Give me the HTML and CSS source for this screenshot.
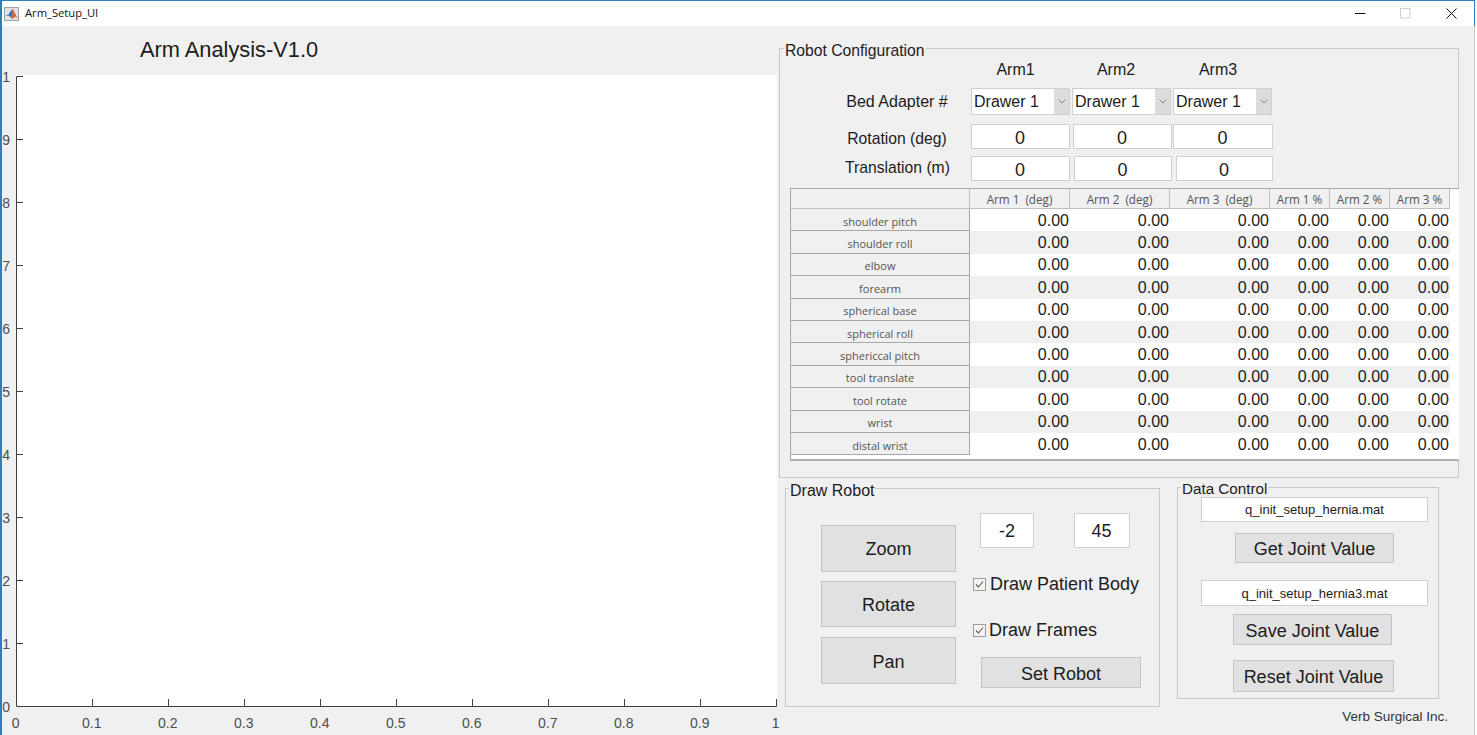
FILE: index.html
```html
<!DOCTYPE html>
<html>
<head>
<meta charset="utf-8">
<title>Arm_Setup_UI</title>
<link rel="stylesheet" href="styles.css">
</head>
<body>
<div class="window">
    <div class="titlebar">
        <svg class="app-icon" width="15" height="14" viewBox="0 0 15 14">
            <rect x="0.5" y="0.5" width="14" height="13" fill="#dfe2e8" stroke="#a0a0a0"/>
            <path d="M1.5 9 L5 7 L7.5 3 L9 5.5 L7 11 L5 8.5 Z" fill="#2f6fb0"/>
            <path d="M7.5 3 L9 2 L13.5 11.5 L11 9.5 L8.5 12 L7 11 L9 6 Z" fill="#e2602a"/>
        </svg>
        <span class="app-name">Arm_Setup_UI</span>
        <div class="win-btn first-btn">
            <svg width="11" height="11" viewBox="0 0 11 11"><path d="M0 5.5 H10.5" stroke="#111" fill="none"/></svg>
        </div>
        <div class="win-btn">
            <svg width="11" height="11" viewBox="0 0 11 11"><rect x="0.5" y="0.5" width="9.5" height="9.5" stroke="#cfcfcf" fill="none"/></svg>
        </div>
        <div class="win-btn">
            <svg width="11" height="11" viewBox="0 0 11 11"><path d="M0.5 0.5 L10.5 10.5 M10.5 0.5 L0.5 10.5" stroke="#111" fill="none"/></svg>
        </div>
    </div>

    <div class="content">
        <div class="plot-col">
            <div class="plot-title">Arm Analysis-V1.0</div>
            <svg class="axes" width="775" height="660" viewBox="0 0 775 660">
                <rect x="14" y="0" width="761" height="632" fill="#fff"/>
                <path d="M14.5 1.5 V631.5 H774.5 V624" fill="none" stroke="#404040"/>
                <path d="M14.5 1.5 H21 M14.5 64.5 H21 M14.5 127.5 H21 M14.5 190.5 H21 M14.5 253.5 H21 M14.5 316.5 H21 M14.5 379.5 H21 M14.5 442.5 H21 M14.5 505.5 H21 M14.5 568.5 H21" fill="none" stroke="#404040"/>
                <path d="M90.5 631.5 V624 M166.5 631.5 V624 M242.5 631.5 V624 M318.5 631.5 V624 M394.5 631.5 V624 M470.5 631.5 V624 M546.5 631.5 V624 M622.5 631.5 V624 M698.5 631.5 V624" fill="none" stroke="#404040"/>
                <g class="y-labels">
                    <text x="8" y="6.5">1</text>
                    <text x="8" y="69.5">9</text>
                    <text x="8" y="132.5">8</text>
                    <text x="8" y="195.5">7</text>
                    <text x="8" y="258.5">6</text>
                    <text x="8" y="321.5">5</text>
                    <text x="8" y="384.5">4</text>
                    <text x="8" y="447.5">3</text>
                    <text x="8" y="510.5">2</text>
                    <text x="8" y="573.5">1</text>
                    <text x="8" y="637">0</text>
                </g>
                <g class="x-labels">
                    <text x="13.7" y="652.5">0</text>
                    <text x="89.7" y="652.5">0.1</text>
                    <text x="165.7" y="652.5">0.2</text>
                    <text x="241.7" y="652.5">0.3</text>
                    <text x="317.7" y="652.5">0.4</text>
                    <text x="393.7" y="652.5">0.5</text>
                    <text x="469.7" y="652.5">0.6</text>
                    <text x="545.7" y="652.5">0.7</text>
                    <text x="621.7" y="652.5">0.8</text>
                    <text x="697.7" y="652.5">0.9</text>
                    <text x="773.7" y="652.5">1</text>
                </g>
            </svg>
        </div>

        <div class="side-col">
            <div class="panel robot-panel">
                <div class="panel-title robot-title">Robot Configuration</div>

                <div class="arm-heads">
                    <span class="arm-head">Arm1</span>
                    <span class="arm-head">Arm2</span>
                    <span class="arm-head arm-head-last">Arm3</span>
                </div>

                <div class="cfg-row bed-row">
                    <div class="cfg-label bed-label">Bed Adapter #</div>
                    <div class="drop">Drawer 1<span class="drop-arrow"><svg width="8" height="5" viewBox="0 0 8 5"><path d="M0.5 0.5 L4 4 L7.5 0.5" fill="none" stroke="#808080"/></svg></span></div>
                    <div class="drop drop-next">Drawer 1<span class="drop-arrow"><svg width="8" height="5" viewBox="0 0 8 5"><path d="M0.5 0.5 L4 4 L7.5 0.5" fill="none" stroke="#808080"/></svg></span></div>
                    <div class="drop drop-next">Drawer 1<span class="drop-arrow"><svg width="8" height="5" viewBox="0 0 8 5"><path d="M0.5 0.5 L4 4 L7.5 0.5" fill="none" stroke="#808080"/></svg></span></div>
                </div>

                <div class="cfg-row rot-row">
                    <div class="cfg-label label-down">Rotation (deg)</div>
                    <div class="edit cfg-edit">0</div>
                    <div class="edit cfg-edit rot-second">0</div>
                    <div class="edit cfg-edit rot-third">0</div>
                </div>

                <div class="cfg-row trans-row">
                    <div class="cfg-label label-up">Translation (m)</div>
                    <div class="edit cfg-edit">0</div>
                    <div class="edit cfg-edit trans-second">0</div>
                    <div class="edit cfg-edit trans-third">0</div>
                </div>

                <div class="table-wrap">
                    <table class="joints">
                        <colgroup>
                            <col class="col-name"><col class="col-deg"><col class="col-deg"><col class="col-deg"><col class="col-pct"><col class="col-pct"><col class="col-pct">
                        </colgroup>
                        <thead>
                            <tr><th></th><th>Arm 1&nbsp; (deg)</th><th>Arm 2&nbsp; (deg)</th><th>Arm 3&nbsp; (deg)</th><th>Arm 1 %</th><th>Arm 2 %</th><th>Arm 3 %</th></tr>
                        </thead>
                        <tbody>
                            <tr><th>shoulder pitch</th><td>0.00</td><td>0.00</td><td>0.00</td><td>0.00</td><td>0.00</td><td>0.00</td></tr>
                            <tr><th>shoulder roll</th><td>0.00</td><td>0.00</td><td>0.00</td><td>0.00</td><td>0.00</td><td>0.00</td></tr>
                            <tr><th>elbow</th><td>0.00</td><td>0.00</td><td>0.00</td><td>0.00</td><td>0.00</td><td>0.00</td></tr>
                            <tr><th>forearm</th><td>0.00</td><td>0.00</td><td>0.00</td><td>0.00</td><td>0.00</td><td>0.00</td></tr>
                            <tr><th>spherical base</th><td>0.00</td><td>0.00</td><td>0.00</td><td>0.00</td><td>0.00</td><td>0.00</td></tr>
                            <tr><th>spherical roll</th><td>0.00</td><td>0.00</td><td>0.00</td><td>0.00</td><td>0.00</td><td>0.00</td></tr>
                            <tr><th>sphericcal pitch</th><td>0.00</td><td>0.00</td><td>0.00</td><td>0.00</td><td>0.00</td><td>0.00</td></tr>
                            <tr><th>tool translate</th><td>0.00</td><td>0.00</td><td>0.00</td><td>0.00</td><td>0.00</td><td>0.00</td></tr>
                            <tr><th>tool rotate</th><td>0.00</td><td>0.00</td><td>0.00</td><td>0.00</td><td>0.00</td><td>0.00</td></tr>
                            <tr><th>wrist</th><td>0.00</td><td>0.00</td><td>0.00</td><td>0.00</td><td>0.00</td><td>0.00</td></tr>
                            <tr><th>distal wrist</th><td>0.00</td><td>0.00</td><td>0.00</td><td>0.00</td><td>0.00</td><td>0.00</td></tr>
                        </tbody>
                    </table>
                </div>
            </div>

            <div class="bottom-row">
                <div class="panel draw-panel">
                    <div class="panel-title draw-title">Draw Robot</div>
                    <div class="draw-buttons">
                        <div class="btn zoom-btn">Zoom</div>
                        <div class="btn rotate-btn">Rotate</div>
                        <div class="btn pan-btn">Pan</div>
                    </div>
                    <div class="draw-options">
                        <div class="view-row">
                            <div class="edit view-edit">-2</div>
                            <div class="edit view-edit view-edit-wide">45</div>
                        </div>
                        <div class="check check-body">
                            <span class="check-box"><svg width="11" height="11" viewBox="0 0 11 11"><path d="M2 5.5 L4.5 8 L9 2.5" fill="none" stroke="#555" stroke-width="1.1"/></svg></span>
                            Draw Patient Body
                        </div>
                        <div class="check check-frames">
                            <span class="check-box"><svg width="11" height="11" viewBox="0 0 11 11"><path d="M2 5.5 L4.5 8 L9 2.5" fill="none" stroke="#555" stroke-width="1.1"/></svg></span>
                            Draw Frames
                        </div>
                        <div class="btn set-btn">Set Robot</div>
                    </div>
                </div>

                <div class="data-col">
                    <div class="panel data-panel">
                        <div class="panel-title data-title">Data Control</div>
                        <div class="edit file-edit file-first">q_init_setup_hernia.mat</div>
                        <div class="btn get-btn">Get Joint Value</div>
                        <div class="edit file-edit file-second">q_init_setup_hernia3.mat</div>
                        <div class="btn save-btn">Save Joint Value</div>
                        <div class="btn reset-btn">Reset Joint Value</div>
                    </div>
                    <div class="credit">Verb Surgical Inc.</div>
                </div>
            </div>
        </div>
    </div>
</div>
</body>
</html>
```
FILE: styles.css
```css
html, body {
    margin: 0;
    background: #fff;
}
* {
    box-sizing: border-box;
    font-family: "Liberation Sans", Arial, sans-serif;
}
.window {
    width: 1475px;
    height: 735px;
    border-top: 1px solid #2b7cc0;
    border-left: 2px solid #2b7cc0;
    overflow: hidden;
    color: #1c1c1c;
}

/* title bar */
.titlebar {
    height: 25px;
    display: flex;
    align-items: center;
    background: #fff;
    border-right: 1px solid #2b7cc0;
    padding-left: 2px;
}
.app-icon {
    flex: none;
}
.app-name {
    margin: 0 0 2px 6px;
    font-family: "Open Sans", sans-serif;
    font-size: 11.2px;
    color: #111;
}
.win-btn {
    width: 45.5px;
    height: 25px;
    display: flex;
    align-items: center;
    justify-content: center;
}
.first-btn {
    margin-left: auto;
}

.content {
    height: 709px;
    display: flex;
    background: #f0f0f0;
    border-right: 1px solid #c9c9c9;
}

/* left side plot */
.plot-col {
    width: 775px;
    flex: none;
}
.plot-title {
    height: 49px;
    padding: 12px 0 0 138px;
    font-size: 21.8px;
    line-height: 24px;
}
.axes {
    display: block;
    overflow: visible;
}
.axes text {
    font-size: 14px;
    fill: #4d4d4d;
}
.y-labels text {
    text-anchor: end;
}
.x-labels text {
    text-anchor: middle;
}

/* right side */
.side-col {
    flex: 1;
    padding: 22px 0 0 2px;
}
.panel {
    position: relative;
    border: 1px solid #c8c8c8;
}
.panel-title {
    position: absolute;
    left: 3px;
    top: -6px;
    padding: 0 1px;
    background: #f0f0f0;
    font-size: 16px;
    line-height: 16px;
}
.robot-title {
    left: 4px;
    font-size: 15.7px;
}
.data-title {
    top: -7px;
    font-size: 15.2px;
}
.robot-panel {
    width: 680px;
    height: 430px;
}
.arm-heads {
    height: 39px;
    display: flex;
    align-items: center;
    padding: 3px 0 0 185.5px;
}
.arm-head {
    width: 100px;
    text-align: center;
    font-size: 16px;
    margin-right: 0.5px;
}
.arm-head-last {
    margin-left: 1.5px;
}
.cfg-row {
    display: flex;
    align-items: center;
    padding-left: 65px;
}
.cfg-label {
    width: 104px;
    margin-right: 22px;
    text-align: center;
    font-size: 15.7px;
    white-space: nowrap;
}
.bed-label {
    font-size: 16px;
}
.label-down {
    padding-top: 5px;
}
.label-up {
    padding-bottom: 2px;
}
.bed-row {
    height: 27px;
}
.rot-row {
    height: 25px;
    margin-top: 9px;
}
.trans-row {
    height: 25px;
    margin-top: 7px;
}
.drop {
    width: 99px;
    height: 27px;
    display: flex;
    align-items: center;
    padding-left: 2px;
    background: #fff;
    border: 1px solid #d0d0d0;
    font-size: 16px;
}
.drop-next {
    margin-left: 2px;
}
.drop-arrow {
    width: 15px;
    height: 25px;
    margin-left: auto;
    display: flex;
    align-items: center;
    justify-content: center;
    background: #dcdcdc;
}
.edit {
    display: flex;
    align-items: center;
    justify-content: center;
    padding-top: 2px;
    background: #fff;
    border: 1px solid #d0d0d0;
}
.cfg-edit {
    width: 99px;
    height: 25px;
    padding: 3px 1px 0 0;
    font-size: 18px;
}
.rot-second {
    margin-left: 3px;
}
.rot-third {
    width: 100px;
    margin-left: 1px;
}
.trans-second {
    width: 98px;
    margin-left: 4px;
}
.trans-third {
    width: 97px;
    margin-left: 4px;
}

/* joint table */
.table-wrap {
    width: 669px;
    height: 273px;
    margin: 7px 0 0 10px;
    background: #fff;
    border-top: 1px solid #a8a8a8;
    border-left: 1px solid #a8a8a8;
    border-bottom: 2px solid #b0b0b0;
}
.joints {
    width: 659px;
    table-layout: fixed;
    border-collapse: separate;
    border-spacing: 0;
}
.col-name { width: 179px; }
.col-deg { width: 100px; }
.col-pct { width: 60px; }
.joints th {
    padding: 0;
    background: #f0f0f0;
    border-right: 1px solid #a8a8a8;
    border-bottom: 1px solid #a8a8a8;
    font-family: "Open Sans", sans-serif;
    font-weight: normal;
    font-size: 11px;
    color: #555;
    text-align: center;
    white-space: nowrap;
}
.joints thead th {
    height: 20px;
    padding-top: 1px;
    border-color: #c0c0c0;
    font-size: 11.7px;
}
.joints tbody tr {
    height: 22.4px;
}
.joints tbody th {
    padding-top: 3px;
}
.joints td {
    padding: 1px 1px 0 0;
    font-size: 16px;
    text-align: right;
    color: #1c1c1c;
}
.joints tbody tr:nth-child(even) td {
    background: #f0f0f0;
}

/* bottom panels */
.bottom-row {
    display: flex;
    align-items: flex-start;
    margin: 9px 0 0 6px;
}
.draw-panel {
    width: 375px;
    height: 219px;
    margin-top: 1px;
    display: flex;
    align-items: flex-start;
}
.data-col {
    width: 271px;
    margin-left: 17px;
}
.data-panel {
    width: 262px;
    height: 212px;
    display: flex;
    flex-direction: column;
    align-items: flex-start;
}
.btn {
    display: flex;
    align-items: center;
    justify-content: center;
    padding-top: 3px;
    background: #e1e1e1;
    border: 1px solid #c4c4c4;
    font-size: 18px;
}
.draw-buttons {
    width: 135px;
    margin: 36px 0 0 35px;
    flex: none;
}
.zoom-btn { height: 47px; padding-top: 1px; }
.rotate-btn { height: 46px; margin-top: 9px; }
.pan-btn { height: 47px; margin-top: 10px; }

.draw-options {
    margin: 24px 0 0 17px;
}
.view-row {
    display: flex;
    margin-left: 7px;
}
.view-edit {
    width: 54px;
    height: 35px;
    font-size: 18px;
}
.view-edit-wide {
    width: 56px;
    margin-left: 40px;
    padding-right: 1px;
}
.check {
    height: 24px;
    display: flex;
    align-items: center;
    font-size: 18px;
    white-space: nowrap;
}
.check-box {
    width: 13px;
    height: 13px;
    margin-right: 4px;
    display: flex;
    align-items: center;
    justify-content: center;
    background: #f4f4f4;
    border: 1px solid #9c9c9c;
}
.check-body { margin-top: 24px; }
.check-frames { margin-top: 22px; }
.check-frames .check-box { margin-right: 3px; }
.set-btn {
    width: 160px;
    height: 31px;
    margin: 15px 0 0 8px;
}

.file-edit {
    width: 227px;
    margin-left: 23px;
    padding-top: 0;
    font-size: 13px;
}
.file-first {
    height: 25px;
    margin-top: 9px;
}
.file-second {
    height: 26px;
    margin-top: 17px;
}
.get-btn {
    width: 159px;
    height: 30px;
    margin: 11px 0 0 57px;
}
.save-btn {
    width: 159px;
    height: 31px;
    margin: 8px 0 0 55px;
}
.reset-btn {
    width: 161px;
    height: 32px;
    margin: 15px 0 0 55px;
}
.credit {
    margin-top: 10px;
    text-align: right;
    font-size: 13.5px;
    line-height: 16px;
    color: #333;
}
```
